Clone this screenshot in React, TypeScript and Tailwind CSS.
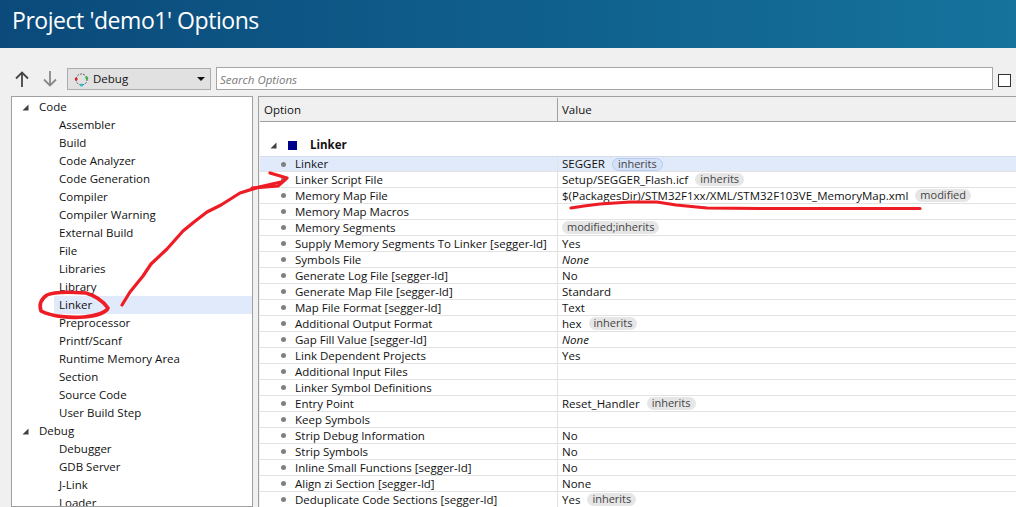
const font = "font-['Open_Sans','Noto_Sans',sans-serif]";

const treeItems: [string, boolean][] = [
  ["Code", true],
  ["Assembler", false],
  ["Build", false],
  ["Code Analyzer", false],
  ["Code Generation", false],
  ["Compiler", false],
  ["Compiler Warning", false],
  ["External Build", false],
  ["File", false],
  ["Libraries", false],
  ["Library", false],
  ["Linker", false],
  ["Preprocessor", false],
  ["Printf/Scanf", false],
  ["Runtime Memory Area", false],
  ["Section", false],
  ["Source Code", false],
  ["User Build Step", false],
  ["Debug", true],
  ["Debugger", false],
  ["GDB Server", false],
  ["J-Link", false],
  ["Loader", false],
];

type Row = { name: string; value?: string; italic?: boolean; badge?: string };

const rows: Row[] = [
  { name: "Linker", value: "SEGGER", badge: "inherits" },
  { name: "Linker Script File", value: "Setup/SEGGER_Flash.icf", badge: "inherits" },
  { name: "Memory Map File", value: "$(PackagesDir)/STM32F1xx/XML/STM32F103VE_MemoryMap.xml", badge: "modified" },
  { name: "Memory Map Macros" },
  { name: "Memory Segments", badge: "modified;inherits" },
  { name: "Supply Memory Segments To Linker [segger-ld]", value: "Yes" },
  { name: "Symbols File", value: "None", italic: true },
  { name: "Generate Log File [segger-ld]", value: "No" },
  { name: "Generate Map File [segger-ld]", value: "Standard" },
  { name: "Map File Format [segger-ld]", value: "Text" },
  { name: "Additional Output Format", value: "hex", badge: "inherits" },
  { name: "Gap Fill Value [segger-ld]", value: "None", italic: true },
  { name: "Link Dependent Projects", value: "Yes" },
  { name: "Additional Input Files" },
  { name: "Linker Symbol Definitions" },
  { name: "Entry Point", value: "Reset_Handler", badge: "inherits" },
  { name: "Keep Symbols" },
  { name: "Strip Debug Information", value: "No" },
  { name: "Strip Symbols", value: "No" },
  { name: "Inline Small Functions [segger-ld]", value: "No" },
  { name: "Align zi Section [segger-ld]", value: "None" },
  { name: "Deduplicate Code Sections [segger-ld]", value: "Yes", badge: "inherits" },
];

function Expander() {
  return (
    <svg width="7" height="7" viewBox="0 0 7 7" className="shrink-0">
      <path d="M6.5 0.5V6.5H0.5Z" fill="#404040" />
    </svg>
  );
}

function ConfigIcon() {
  return (
    <svg width="15" height="15" viewBox="0 0 15 15" className="shrink-0">
      <circle cx="7.5" cy="7.5" r="5.5" fill="none" stroke="#333" strokeWidth="1" strokeDasharray="1.5 1.5" />
      <circle cx="2.2" cy="7" r="1.5" fill="#e02020" />
      <circle cx="12.8" cy="6" r="1.5" fill="#30c040" />
      <circle cx="7.5" cy="13" r="1.5" fill="#20c0d0" />
    </svg>
  );
}

function Annotations() {
  return (
    <svg width="1016" height="507" className="absolute left-0 top-0 pointer-events-none" fill="none" stroke="#ee1c25" strokeWidth="3.2" strokeLinecap="round" strokeLinejoin="round">
      <path d="M122 305 L130 292 L143 276 L151 264 L167 249 L183 231 L194 222 L207 212 L221 205 L240 193 L259 187 L281 182" />
      <path d="M270 173 L287 178 L278 186 L252 188" />
      <path strokeWidth="3.6" d="M86 293 C72 292 55 291 47 295 C41 299 39 305 41 311 C52 317 72 318 84 317 C94 316 106 313 108 308 C103 301 96 296 86 293Z" />
      <path d="M571 208 L584 206 L600 204 L630 202 L657 202 L676 205 L707 208 L760 208.5 L920 208.5" />
    </svg>
  );
}

export default function App() {
  return (
    <div className={`relative w-[1016px] h-[507px] overflow-hidden bg-[#f0f0f0] text-[11.5px] text-[#111] ${font}`}>
      <div className="h-12 flex items-center pl-3 pb-2 bg-linear-to-r from-[#0b4a7b] to-[#15739c] text-white text-[23px] tracking-[-0.45px]">
        Project 'demo1' Options
      </div>

      <div className="h-12 flex items-end pb-1.5 pl-3.5 pr-[5px]">
        <div className="flex h-[22px] items-center gap-3.5 pl-[1px] w-[53px]">
          <svg width="14" height="16" viewBox="0 0 14 16" fill="none" stroke="#444" strokeWidth="1.8">
            <path d="M7 16V2M1 7.5L7 1.5L13 7.5" />
          </svg>
          <svg width="14" height="16" viewBox="0 0 14 16" fill="none" stroke="#888" strokeWidth="1.8">
            <path d="M7 0V14M1 8.5L7 14.5L13 8.5" />
          </svg>
        </div>
        <div className="w-[144px] h-[22px] border border-[#adadad] bg-[#e1e1e1] flex items-center pl-1.5 pr-[5px] gap-1">
          <ConfigIcon />
          <span>Debug</span>
          <svg width="8" height="4" viewBox="0 0 8 4" className="ml-auto">
            <path d="M0 0H8L4 4Z" fill="#111" />
          </svg>
        </div>
        <div className="ml-[5px] w-[777px] h-[23px] border border-[#a5a5a5] bg-white flex items-center pl-[3px] pt-0.5 italic text-[#7a7a7a]">
          Search Options
        </div>
        <div className="ml-[5px] mb-[3px] w-[13px] h-[13px] border border-[#333] bg-white" />
      </div>

      <div className="flex h-[411px] pl-[11px]">
        <div className="w-[242px] border border-[#a0a0a0] bg-white pl-px pt-px overflow-hidden">
          {treeItems.map(([label, group]) => (
            <div key={label} className={`h-[18px] flex items-center ${label === "Linker" ? "bg-[#e1eafb] ml-[41px] pl-[5px]" : group ? "pl-[9px]" : "pl-[46px]"}`}>
              {group && <span className="mr-[10px] flex"><Expander /></span>}
              {label}
            </div>
          ))}
        </div>
        <div className="ml-[5px] flex-1 border-l border-t border-[#a0a0a0] pl-px overflow-hidden">
          <div className="h-[24px] flex items-center border-b border-[#a0a0a0] bg-[#f0f0f0] mt-px">
            <div className="w-[298px] h-full pl-1 flex items-center border-r border-[#a0a0a0]">Option</div>
            <div className="pl-1">Value</div>
          </div>
          <div className="bg-white h-full">
            <div className="h-4" />
            <div className="h-4 flex items-center pl-2.5 pb-0.5 gap-[11px] font-bold">
              <Expander />
              <span className="w-[9px] h-[9px] bg-[#00008b] mr-[2px]" />
              Linker
            </div>
            <div className="h-0.5" />
            {rows.map((row, i) => (
              <div key={row.name} className={`h-4 flex border-b border-[#e2e2e2] ${i === 0 ? "bg-[#e1eafb] border-t border-t-[#d5dcea]" : ""}`}>
                <div className="w-[298px] flex items-center pl-[21px] gap-[9px] border-r border-[#e2e2e2]">
                  <span className="w-[5px] h-[5px] rounded-full bg-[#808080] shrink-0" />
                  <span className="whitespace-nowrap">{row.name}</span>
                </div>
                <div className="flex items-center pl-1 gap-[7px] whitespace-nowrap">
                  {row.value && <span className={row.italic ? "italic" : ""}>{row.value}</span>}
                  {row.badge && (
                    <span className={`h-[13px] px-[5px] rounded-[7px] flex items-center text-[11px] text-[#444] ${i === 0 ? "bg-[#d4e1f7] border border-[#b6cdf0]" : "bg-[#e6e6e6]"}`}>
                      {row.badge}
                    </span>
                  )}
                </div>
              </div>
            ))}
          </div>
        </div>
      </div>

      <Annotations />
    </div>
  );
}
